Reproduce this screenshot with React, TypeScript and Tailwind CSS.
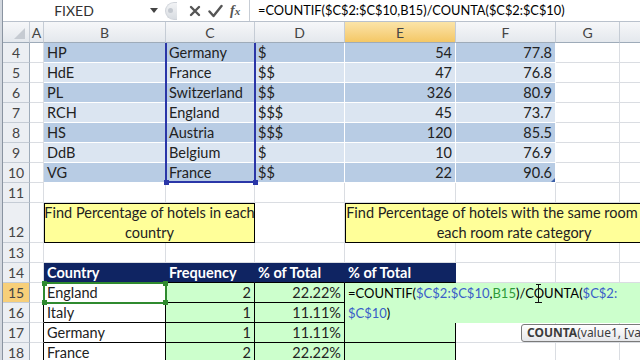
import React from "react";

const g = "bg-white border-[#dadde2]";
const dk = "bg-[#b8cce4] border-white";
const lt = "bg-[#dbe5f1] border-white";
const navy = "bg-[#0f2462] border-r-[#0f2462] border-b-black text-white font-bold";
const grn = "bg-[#ccffcc] border-black";

type CellProps = { w: string; c: string; children?: React.ReactNode; right?: boolean };

function Cell({ w, c, children, right }: CellProps) {
  return (
    <div
      className={`${w} shrink-0 h-full border-r border-b overflow-hidden whitespace-nowrap flex items-center ${
        right ? "justify-end pr-[3px]" : "pl-[3px]"
      } ${c}`}
    >
      {children}
    </div>
  );
}

function RowHead({ n, tall, active }: { n: number; tall?: boolean; active?: boolean }) {
  return (
    <div
      className={`w-[27px] shrink-0 h-full flex justify-center border-r border-b border-r-[#9eabb9] border-b-[#c5ccd5] text-[14px] text-[#444] ${
        tall ? "items-end pb-[0px]" : "items-center"
      } ${active ? "bg-[#f7cf79]" : "bg-[#eceff3]"}`}
    >
      {n}
    </div>
  );
}

const data: [string, string, string, string, string][] = [
  ["HP", "Germany", "$", "54", "77.8"],
  ["HdE", "France", "$$", "47", "76.8"],
  ["PL", "Switzerland", "$$", "326", "80.9"],
  ["RCH", "England", "$$$", "45", "73.7"],
  ["HS", "Austria", "$$$", "120", "85.5"],
  ["DdB", "Belgium", "$", "10", "76.9"],
  ["VG", "France", "$$", "22", "90.6"],
];

const freq: [string, string, string][] = [
  ["England", "2", "22.22%"],
  ["Italy", "1", "11.11%"],
  ["Germany", "1", "11.11%"],
  ["France", "2", "22.22%"],
];

function EmptyRest() {
  return (
    <>
      <Cell w="w-[100px]" c={g} />
      <Cell w="w-[64px]" c={g} />
      <Cell w="w-[40px]" c={g} />
    </>
  );
}

export default function App() {
  return (
    <div className="relative w-[640px] h-[360px] overflow-hidden bg-white flex font-['Lato',sans-serif] text-[14.5px] text-[#222]">
      {/* window frame */}
      <div className="w-[3px] h-full shrink-0 bg-[#d3d8df] border-r border-[#8a94a1]" />
      <div className="flex-1 flex flex-col overflow-hidden">
        {/* formula bar */}
        <div className="h-[22px] shrink-0 flex items-center border-b border-[#b9c1cc] bg-white">
          <div className="w-[142px] shrink-0 text-center text-[14px] text-[#333]">FIXED</div>
          <div className="w-[17px] shrink-0 flex justify-center">
            <svg width="8" height="5" viewBox="0 0 8 5">
              <polygon points="0,0 8,0 4,5" fill="#444" />
            </svg>
          </div>
          <div className="ml-[3px] w-[12px] h-[18px] shrink-0 rounded-l-full bg-linear-to-b from-[#f2f3f5] to-[#d9dde2] border border-r-0 border-[#d0d4da] flex items-center pl-[2px]">
            <div className="w-[5px] h-[5px] rounded-full bg-[#c4c9d0]" />
          </div>
          <div className="ml-[12px] shrink-0">
            <svg width="12" height="12" viewBox="0 0 12 12">
              <path d="M2 2 L10 10 M10 2 L2 10" stroke="#555" strokeWidth="2.4" strokeLinecap="round" />
            </svg>
          </div>
          <div className="ml-[7px] shrink-0">
            <svg width="15" height="14" viewBox="0 0 15 14">
              <path d="M1.5 7.5 L5.5 12 L13.5 2" stroke="#555" strokeWidth="2.4" fill="none" strokeLinecap="round" strokeLinejoin="round" />
            </svg>
          </div>
          <div className="ml-[7px] w-[13px] shrink-0 font-['Liberation_Serif',serif] italic text-[14px] text-[#555] leading-none font-bold">
            f<span className="text-[11px]">x</span>
          </div>
          <div className="ml-[6px] w-px h-full bg-[#c7cdd5] shrink-0" />
          <div className="pl-[8px] whitespace-nowrap text-black text-[12.8px]">=COUNTIF($C$2:$C$10,B15)/COUNTA($C$2:$C$10)</div>
        </div>

        {/* column headers */}
        <div className="h-[21px] shrink-0 flex text-[14px] text-[#444]">
          <div className="w-[27px] shrink-0 h-full border-r border-b border-r-[#c5ccd5] border-b-[#9eabb9] bg-linear-to-b from-[#f6f7f9] to-[#e4e8ed] relative">
            <svg className="absolute right-[4px] bottom-[3px]" width="11" height="11" viewBox="0 0 11 11">
              <polygon points="11,0 11,11 0,11" fill="#c6cbd2" />
            </svg>
          </div>
          {[
            ["A", "w-[14px]", false],
            ["B", "w-[122px]", false],
            ["C", "w-[89px]", false],
            ["D", "w-[90px]", false],
            ["E", "w-[111px]", true],
            ["F", "w-[100px]", false],
            ["G", "w-[64px]", false],
            ["", "w-[40px]", false],
          ].map(([l, w, a]) => (
            <div
              key={(l as string) + (w as string)}
              className={`${w} shrink-0 h-full flex items-center justify-center border-r border-b border-r-[#c5ccd5] border-b-[#9eabb9] ${
                a ? "bg-linear-to-b from-[#fbe4a8] to-[#f4c765]" : "bg-linear-to-b from-[#f6f7f9] to-[#e4e8ed]"
              }`}
            >
              {l}
            </div>
          ))}
        </div>

        {/* rows 4-10 */}
        {data.map((r, i) => {
          const c = i % 2 === 0 ? dk : lt;
          return (
            <div key={i} className="h-[20px] shrink-0 flex">
              <RowHead n={i + 4} />
              <Cell w="w-[14px]" c={g} />
              <Cell w="w-[122px]" c={c}>{r[0]}</Cell>
              <Cell w="w-[89px]" c={c}>{r[1]}</Cell>
              <Cell w="w-[90px]" c={c}>{r[2]}</Cell>
              <Cell w="w-[111px]" c={c} right>{r[3]}</Cell>
              <Cell w="w-[100px]" c={c} right>{r[4]}</Cell>
              <Cell w="w-[64px]" c={g} />
              <Cell w="w-[40px]" c={g} />
            </div>
          );
        })}

        {/* row 11 */}
        <div className="h-[20px] shrink-0 flex">
          <RowHead n={11} />
          <Cell w="w-[14px]" c={g} />
          <Cell w="w-[122px]" c={g} />
          <Cell w="w-[89px]" c={g} />
          <Cell w="w-[90px]" c={g} />
          <Cell w="w-[111px]" c={g} />
          <EmptyRest />
        </div>

        {/* row 12 */}
        <div className="h-[40px] shrink-0 flex">
          <RowHead n={12} tall />
          <Cell w="w-[14px]" c={g} />
          <div className="w-[211px] shrink-0 h-full border border-black bg-[#ffff99] flex flex-col items-center justify-center leading-[20px] whitespace-nowrap">
            <div>Find Percentage of hotels in each</div>
            <div>country</div>
          </div>
          <Cell w="w-[90px]" c={g} />
          <div className="w-[338px] shrink-0 h-full border border-black bg-[#ffff99] flex flex-col items-center justify-center leading-[20px] whitespace-nowrap">
            <div>Find Percentage of hotels with the same room rate in</div>
            <div>each room rate category</div>
          </div>
        </div>

        {/* row 13 */}
        <div className="h-[20px] shrink-0 flex">
          <RowHead n={13} />
          <Cell w="w-[14px]" c={g} />
          <Cell w="w-[122px]" c={g} />
          <Cell w="w-[89px]" c={g} />
          <Cell w="w-[90px]" c={g} />
          <Cell w="w-[111px]" c={g} />
          <EmptyRest />
        </div>

        {/* row 14 */}
        <div className="h-[20px] shrink-0 flex">
          <RowHead n={14} />
          <Cell w="w-[14px]" c={g} />
          <Cell w="w-[122px]" c={navy}>Country</Cell>
          <Cell w="w-[89px]" c={navy}>Frequency</Cell>
          <Cell w="w-[90px]" c={navy}>% of Total</Cell>
          <Cell w="w-[111px]" c={navy}>% of Total</Cell>
          <EmptyRest />
        </div>

        {/* rows 15-18 */}
        {freq.map((r, i) => (
          <div key={i} className="h-[20px] shrink-0 flex">
            <RowHead n={15 + i} active={i === 0} />
            <Cell w="w-[14px]" c="bg-white border-r-black border-b-[#dadde2]" />
            <Cell w="w-[122px]" c="bg-white border-black">{r[0]}</Cell>
            <Cell w="w-[89px]" c={grn} right>{r[1]}</Cell>
            <Cell w="w-[90px]" c={grn} right>{r[2]}</Cell>
            <Cell w="w-[111px]" c={grn} />
            <EmptyRest />
          </div>
        ))}
      </div>

      {/* reference highlight C2:C10 */}
      <div className="absolute left-[165px] top-[43px] w-[91px] h-[140px] border-l-2 border-r-2 border-b-2 border-[#2a36a8]" />
      <div className="absolute left-[164px] top-[180px] w-[5px] h-[5px] bg-[#2a36a8]" />
      <div className="absolute left-[253px] top-[180px] w-[5px] h-[5px] bg-[#2a36a8]" />

      {/* table resize handle */}
      <svg className="absolute left-[551px] top-[178px]" width="4" height="4" viewBox="0 0 4 4">
        <polygon points="4,0 4,4 0,4" fill="#3b5fa8" />
      </svg>

      {/* reference highlight B15 */}
      <div className="absolute left-[43px] top-[282px] w-[124px] h-[22px] border-2 border-[#2f8a2f]" />
      <div className="absolute left-[42px] top-[281px] w-[5px] h-[5px] bg-[#2f8a2f]" />
      <div className="absolute left-[163px] top-[281px] w-[5px] h-[5px] bg-[#2f8a2f]" />
      <div className="absolute left-[42px] top-[300px] w-[5px] h-[5px] bg-[#2f8a2f]" />
      <div className="absolute left-[163px] top-[300px] w-[5px] h-[5px] bg-[#2f8a2f]" />

      {/* in-cell edit box */}
      <div className="absolute left-[344px] top-[283px] w-[320px] h-[40px] bg-[#ccffcc] border-l border-black pl-[3px] leading-[20px] whitespace-nowrap text-black text-[13px]">
        <div>
          =COUNTIF(<span className="text-[#3a5ec8]">$C$2:$C$10</span>,<span className="text-[#2f9a3a]">B15</span>)/COUNTA(<span className="text-[#3a5ec8]">$C$2:</span>
        </div>
        <div>
          <span className="text-[#3a5ec8]">$C$10</span>)
        </div>
      </div>

      {/* I-beam cursor */}
      <svg className="absolute left-[534px] top-[283px]" width="9" height="21" viewBox="0 0 9 21">
        <path d="M4.5 1 V20 M2 1.5 H7 M1 19.5 H8" stroke="#111" strokeWidth="1" fill="none" />
      </svg>

      {/* tooltip */}
      <div className="absolute left-[521px] top-[324px] h-[18px] pl-[5px] pr-[6px] rounded-[3px] border border-[#7a7a7a] bg-linear-to-b from-white to-[#e6e7ea] font-['Noto_Sans',sans-serif] text-[12px] leading-[16px] text-[#3b3b3b] whitespace-nowrap">
        <span className="font-bold">COUNTA</span>(value1, [value2], ...)
      </div>
    </div>
  );
}
